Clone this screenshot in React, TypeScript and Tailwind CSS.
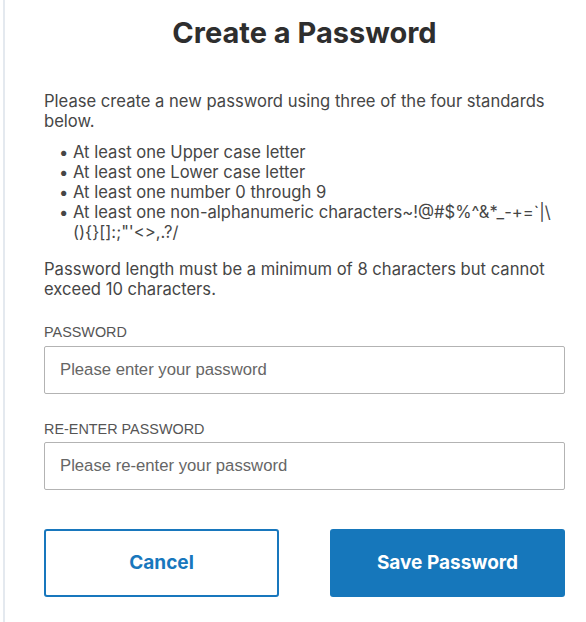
import React from "react";

const bullets: React.ReactNode[] = [
  "At least one Upper case letter",
  "At least one Lower case letter",
  "At least one number 0 through 9",
  <>
    At least one non-alphanumeric characters~!@#$%^&amp;*_-+=`|\
    <br />
    {"(){}[]:;\"'<>,.?/"}
  </>,
];

export default function App() {
  const inter = { fontFamily: "Inter, 'Noto Sans', sans-serif" };
  return (
    <div className="w-full min-h-[622px] bg-white flex pl-[3px]">
      <div className="border-l-2 border-[#e4e9ef] flex-1 min-h-[622px]">
        <div className="w-[521px] ml-[39px] pt-[16px] text-[#464646] flex flex-col" style={inter}>
          <h1 className="text-center text-[29px] leading-[34px] font-bold text-[#2e2e2e]">Create a Password</h1>
          <p className="mt-[41px] text-[16.6px] leading-[20px]">
            Please create a new password using three of the four standards below.
          </p>
          <ul className="mt-[11px] text-[16.6px] leading-[20px] pl-[15px] flex flex-col">
            {bullets.map((b, i) => (
              <li key={i} className="flex whitespace-nowrap">
                <span className="w-[14px] shrink-0">•</span>
                <span>{b}</span>
              </li>
            ))}
          </ul>
          <p className="mt-[17px] text-[16.6px] leading-[20px]">
            Password length must be a minimum of 8 characters but cannot exceed 10 characters.
          </p>
          <div className="flex flex-col" style={{ fontFamily: "'Liberation Sans', Arial, sans-serif" }}>
            <label className="mt-[25px] mb-[6px] text-[14.4px] leading-[16px] text-[#555]">PASSWORD</label>
            <input
              type="password"
              placeholder="Please enter your password"
              className="w-full h-[48px] border border-[#b3b3b3] rounded-[2px] px-[15px] text-[16.7px] placeholder:text-[#666] outline-none"
            />
            <label className="mt-[27px] mb-[5px] text-[14.4px] leading-[16px] text-[#555]">RE-ENTER PASSWORD</label>
            <input
              type="password"
              placeholder="Please re-enter your password"
              className="w-full h-[48px] border border-[#b3b3b3] rounded-[2px] px-[15px] text-[16.7px] placeholder:text-[#666] outline-none"
            />
          </div>
          <div className="grid grid-cols-2 gap-[51px] mt-[39px]">
            <button className="h-[68px] border-2 border-[#1877bd] rounded-[3px] bg-white text-[#1877bd] text-[19px] font-bold">
              Cancel
            </button>
            <button className="h-[68px] rounded-[3px] bg-[#1677bb] text-white text-[19px] font-bold">
              Save Password
            </button>
          </div>
        </div>
      </div>
    </div>
  );
}
